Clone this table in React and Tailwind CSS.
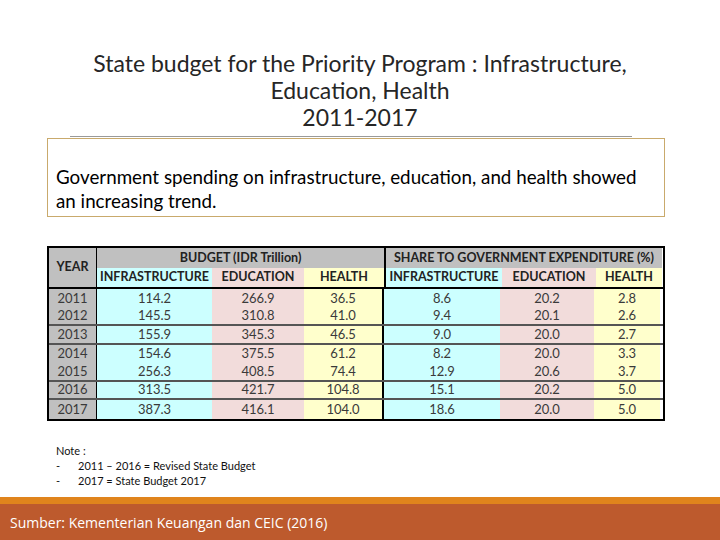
// Slide: state budget for priority programs, 2011-2017
import React from 'react';

const ROWS = [
  { year: '2011', b: ['114.2', '266.9', '36.5'], s: ['8.6', '20.2', '2.8'], line: false },
  { year: '2012', b: ['145.5', '310.8', '41.0'], s: ['9.4', '20.1', '2.6'], line: true },
  { year: '2013', b: ['155.9', '345.3', '46.5'], s: ['9.0', '20.0', '2.7'], line: true },
  { year: '2014', b: ['154.6', '375.5', '61.2'], s: ['8.2', '20.0', '3.3'], line: false },
  { year: '2015', b: ['256.3', '408.5', '74.4'], s: ['12.9', '20.6', '3.7'], line: true },
  { year: '2016', b: ['313.5', '421.7', '104.8'], s: ['15.1', '20.2', '5.0'], line: true },
  { year: '2017', b: ['387.3', '416.1', '104.0'], s: ['18.6', '20.0', '5.0'], line: false },
];

const FONT = "font-['Lato','Noto_Sans',sans-serif]";

// column widths, budget group then share group
const BW = ['w-[115px]', 'w-[92px]', 'w-[80px]'];
const SW = ['w-[116px]', 'w-[94px]', 'w-[66px]'];
const BG = ['bg-[#ccffff]', 'bg-[#f2dcdb]', 'bg-[#ffffcc]'];

const SubHeads = ({ widths }) => (
  <div className="flex h-[19px]">
    {['INFRASTRUCTURE', 'EDUCATION', 'HEALTH'].map((t, i) => (
      <div key={t} className={`${widths[i]} ${BG[i]} flex items-center justify-center`}>{t}</div>
    ))}
  </div>
);

const BudgetTable = () => (
  <div className={`w-[618px] border-2 border-black ${FONT} text-[12.5px] text-[#222]`}>
    {/* header */}
    <div className="flex border-b-2 border-black font-bold">
      <div className="w-[48px] bg-[#c0c0c0] border-r border-black flex items-center justify-center">YEAR</div>
      <div className="flex flex-col border-r-2 border-black">
        <div className="h-[20px] bg-[#c0c0c0] flex items-center justify-center">BUDGET (IDR Trillion)</div>
        <SubHeads widths={BW} />
      </div>
      <div className="flex flex-col">
        <div className="h-[20px] bg-[#c0c0c0] flex items-center justify-center">SHARE TO GOVERNMENT EXPENDITURE (%)</div>
        <SubHeads widths={SW} />
      </div>
    </div>

    {ROWS.map((r) => (
      <div
        key={r.year}
        className={`flex h-[18.5px] text-[13px] text-[#3a3a3a] ${r.line ? 'border-b-2 border-[#555]' : ''}`}
      >
        <div className="w-[48px] bg-[#c0c0c0] border-r border-black flex items-center justify-center">{r.year}</div>
        {r.b.map((v, i) => (
          <div
            key={'b' + i}
            className={`${BW[i]} ${BG[i]} flex items-center justify-center ${i === 2 ? 'border-r-2 border-black' : ''}`}
          >
            {v}
          </div>
        ))}
        {r.s.map((v, i) => (
          <div key={'s' + i} className={`${SW[i]} ${BG[i]} flex items-center justify-center`}>{v}</div>
        ))}
      </div>
    ))}
  </div>
);

export default function App() {
  return (
    <div className={`w-[720px] h-[540px] bg-white flex flex-col overflow-hidden ${FONT}`}>
      {/* title */}
      <div className="pt-[50px] text-center text-[23px] leading-[27px] text-[#262626]">
        <div>State budget for the Priority Program : Infrastructure,</div>
        <div>Education, Health</div>
        <div>2011-2017</div>
      </div>

      <div className="ml-[70px] mt-[5px] w-[562px] h-px bg-[#9a9a9a]" />

      {/* summary box */}
      <div className="ml-[47px] mt-[1px] w-[618px] h-[79px] border border-[#c9aa6c] pl-[8px] pr-[20px] pt-[26px] text-[18.8px] leading-[24px] text-black">
        Government spending on infrastructure, education, and health showed an increasing trend.
      </div>

      <div className="ml-[47px] mt-[29px]">
        <BudgetTable />
      </div>

      {/* notes */}
      <div className="ml-[56px] mt-[22px] text-[11px] leading-[15px] text-[#111]">
        <div>Note :</div>
        <div className="flex">
          <span className="w-[22px]">-</span>
          <span>2011 – 2016 = Revised State Budget</span>
        </div>
        <div className="flex">
          <span className="w-[22px]">-</span>
          <span>2017 = State Budget 2017</span>
        </div>
      </div>

      {/* footer */}
      <div className="mt-auto">
        <div className="h-[7px] bg-[#e0841c]" />
        <div className="h-[36px] bg-[#bd5a2d] flex items-center pl-[10px] text-white text-[14px] font-['Open_Sans',sans-serif]">
          Sumber: Kementerian Keuangan dan CEIC (2016)
        </div>
      </div>
    </div>
  );
}
